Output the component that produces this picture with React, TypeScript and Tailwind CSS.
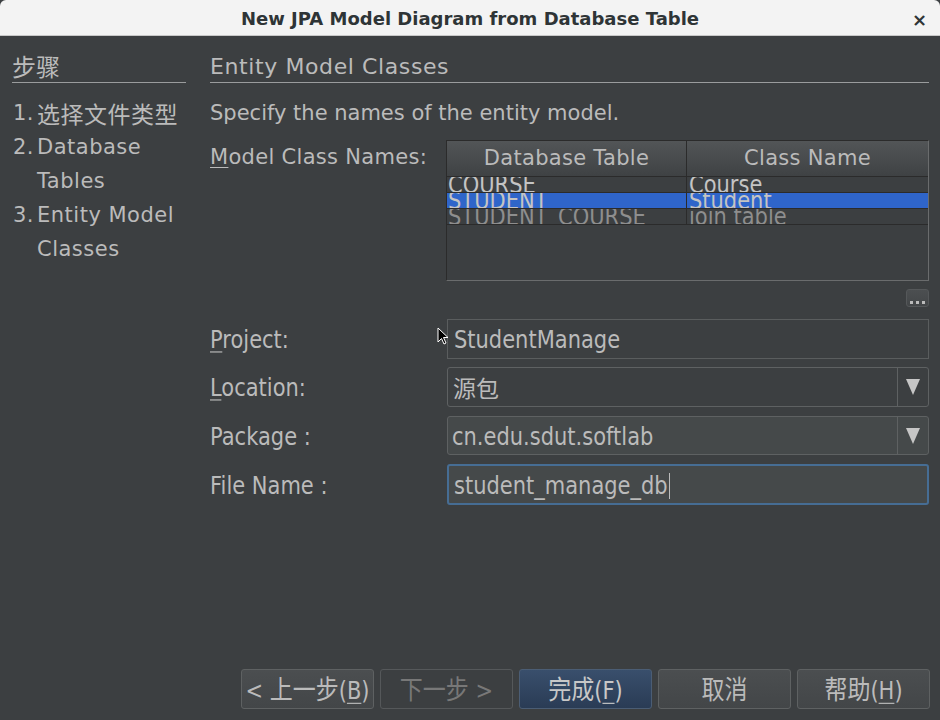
const sans = "font-['DejaVu_Sans','Noto_Sans_CJK_SC',sans-serif]"
const cjk = "font-['Noto_Sans_CJK_SC',sans-serif]"
// text in the form, table and buttons is drawn a bit taller than wide
const tall = 'inline-block scale-y-115 whitespace-nowrap'

const rows = [
  { table: 'COURSE', cls: 'Course', dim: false, selected: false },
  { table: 'STUDENT', cls: 'Student', dim: false, selected: true },
  { table: 'STUDENT_COURSE', cls: 'join table', dim: true, selected: false },
]

function C({ children, size = 'text-[23px]' }: { children: React.ReactNode; size?: string }) {
  return <span className={`${cjk} ${size}`}>{children}</span>
}

function U({ children }: { children: React.ReactNode }) {
  return <span className="underline underline-offset-[3px] decoration-1">{children}</span>
}

function Arrow() {
  return (
    <div className="w-[31px] h-full border-l border-[#5e6162] flex items-center justify-center">
      <svg width="14" height="18" viewBox="0 0 14 18">
        <polygon points="0,1 14,1 7,17" fill="#c6c6c6" />
      </svg>
    </div>
  )
}

function Field({ label, className, children }: { label: React.ReactNode; className?: string; children: React.ReactNode }) {
  return (
    <div className={`flex items-center ${className ?? ''}`}>
      <div className="w-[237px] text-[21px] text-[#bbbbbb]">
        <span className={`${tall} translate-y-[2px]`}>{label}</span>
      </div>
      {children}
    </div>
  )
}

function Btn({ children, kind }: { children: React.ReactNode; kind?: 'disabled' | 'default' }) {
  const look =
    kind === 'disabled'
      ? 'bg-[#3c3f41] border-[#55585a] text-[#787878]'
      : kind === 'default'
        ? 'bg-gradient-to-b from-[#394f6c] to-[#2a3c55] border-[#4b5d74] text-[#c8c8c8]'
        : 'bg-gradient-to-b from-[#4b4e50] to-[#434648] border-[#5e6162] text-[#bbbbbb]'
  return (
    <button className={`w-[133px] h-[40px] rounded-[3px] border text-[21px] flex items-center justify-center ${look}`}>
      <span className={tall}>{children}</span>
    </button>
  )
}

export default function App() {
  return (
    <div className={`w-[940px] h-[720px] bg-[#3c3f41] flex flex-col overflow-hidden relative ${sans}`}>
      <div className="h-[36px] shrink-0 bg-[#f3f3f3] border-b border-[#c8c8c8] rounded-t-[6px] flex items-center justify-center relative">
        <span className="text-[18px] font-bold text-[#2e3436] pt-[1px]">New JPA Model Diagram from Database Table</span>
        <span className="absolute right-[13px] top-[6px] text-[18px] font-bold text-[#2e3436]">×</span>
      </div>

      <div className="flex flex-1 pt-[16px]">
        <div className="w-[174px] ml-[12px] shrink-0">
          <div className="h-[31px] border-b border-[#9a9c9d] text-[#bbbbbb] leading-[28px]">
            <C size="text-[24px]">步骤</C>
          </div>
          <div className="mt-[13px] text-[21px] text-[#bbbbbb] leading-[34px] tracking-[0.5px]">
            <div className="flex">
              <span className="w-[25px] pl-[1px]">1.</span>
              <C>选择文件类型</C>
            </div>
            <div className="flex">
              <span className="w-[25px] pl-[1px]">2.</span>
              <span>
                Database
                <br />
                Tables
              </span>
            </div>
            <div className="flex">
              <span className="w-[25px] pl-[1px]">3.</span>
              <span>
                Entity Model
                <br />
                Classes
              </span>
            </div>
          </div>
        </div>

        <div className="ml-[24px] w-[719px] flex flex-col">
          <div className="h-[31px] border-b border-[#9a9c9d] text-[22px] tracking-[0.6px] text-[#bbbbbb] leading-[30px]">
            Entity Model Classes
          </div>
          <div className="mt-[13px] text-[21px] text-[#bbbbbb] leading-[34px]">Specify the names of the entity model.</div>

          <div className="flex mt-[10px]">
            <div className="w-[236px] text-[21px] tracking-[0.3px] text-[#bbbbbb] leading-[34px]">
              <U>M</U>odel Class Names:
            </div>
            <div className="w-[483px] h-[141px] border border-[#2b2b2b] border-r-[#6a6c6d] border-b-[#6a6c6d] flex flex-col">
              <div className="h-[36px] shrink-0 flex bg-gradient-to-b from-[#525557] to-[#3f4244] border-b border-[#2b2b2b] text-[21px] tracking-[0.3px] text-[#bbbbbb]">
                <div className="w-[240px] border-r border-[#2b2b2b] flex items-center justify-center">Database Table</div>
                <div className="flex-1 flex items-center justify-center">Class Name</div>
              </div>
              {rows.map((r) => (
                <div
                  key={r.table}
                  className={`h-[16px] shrink-0 flex border-b border-[#2b2b2b] overflow-hidden text-[21px] leading-[16px] ${r.selected ? 'bg-[#2f65ca]' : ''} ${r.dim ? 'text-[#8e8e8e]' : 'text-[#c4c4c4]'}`}
                >
                  <div className="w-[240px] border-r border-[#2b2b2b] pl-[1px] overflow-hidden">
                    <span className={`${tall} -translate-y-[0.5px]`}>{r.table}</span>
                  </div>
                  <div className="flex-1 pl-[2px] overflow-hidden">
                    <span className={`${tall} -translate-y-[0.5px]`}>{r.cls}</span>
                  </div>
                </div>
              ))}
            </div>
          </div>

          <div className="flex justify-end mt-[8px]">
            <div className="w-[23px] h-[18px] rounded-[3px] border border-[#55585a] bg-gradient-to-b from-[#4c4f51] to-[#434648] flex items-end justify-center gap-[3px] pb-[2px]">
              <span className="w-[3px] h-[3px] bg-[#bbbbbb]" />
              <span className="w-[3px] h-[3px] bg-[#bbbbbb]" />
              <span className="w-[3px] h-[3px] bg-[#bbbbbb]" />
            </div>
          </div>

          <div className="mt-[12px] flex flex-col">
            <Field label={<><U>P</U>roject:</>}>
              <div className="w-[482px] h-[40px] border border-[#5a5d5e] flex items-center pl-[6px] text-[21px] text-[#bbbbbb]">
                <span className={`${tall} translate-y-[2px]`}>StudentManage</span>
              </div>
            </Field>
            <Field label={<><U>L</U>ocation:</>} className="mt-[8px]">
              <div className="w-[482px] h-[40px] border border-[#5e6162] rounded-[3px] flex items-center">
                <span className="flex-1 pl-[5px] text-[#bbbbbb]">
                  <C>源包</C>
                </span>
                <Arrow />
              </div>
            </Field>
            <Field label="Package :" className="mt-[9px]">
              <div className="w-[482px] h-[39px] border border-[#5e6162] rounded-[3px] bg-[#45494a] flex items-center">
                <span className="flex-1 pl-[4px] text-[21px] text-[#bbbbbb]">
                  <span className={`${tall} translate-y-[2px]`}>cn.edu.sdut.softlab</span>
                </span>
                <Arrow />
              </div>
            </Field>
            <Field label="File Name :" className="mt-[9px]">
              <div className="w-[482px] h-[41px] border-2 border-[#466d94] rounded-[3px] bg-[#45494a] flex items-center pl-[5px] text-[21px] text-[#bbbbbb]">
                <span className={`${tall} translate-y-[2px]`}>student_manage_db</span>
                <span className="w-[1px] h-[26px] bg-[#bbbbbb] ml-[1px] translate-y-[1px]" />
              </div>
            </Field>
          </div>
        </div>
      </div>

      <div className="h-[51px] shrink-0 flex justify-end gap-[6px] pr-[10px] pb-[11px]">
        <Btn>
          &lt; <C>上一步</C>(<U>B</U>)
        </Btn>
        <Btn kind="disabled">
          <C>下一步</C> &gt;
        </Btn>
        <Btn kind="default">
          <C>完成</C>(<U>F</U>)
        </Btn>
        <Btn>
          <C>取消</C>
        </Btn>
        <Btn>
          <C>帮助</C>(<U>H</U>)
        </Btn>
      </div>

      <svg className="absolute left-[437px] top-[327px]" width="12" height="19" viewBox="0 0 12 19">
        <path d="M1 1 L1 15 L4.5 11.5 L7 17 L9 16 L6.5 10.5 L11 10.5 Z" fill="#000" stroke="#fff" strokeWidth="1" />
      </svg>
    </div>
  )
}
